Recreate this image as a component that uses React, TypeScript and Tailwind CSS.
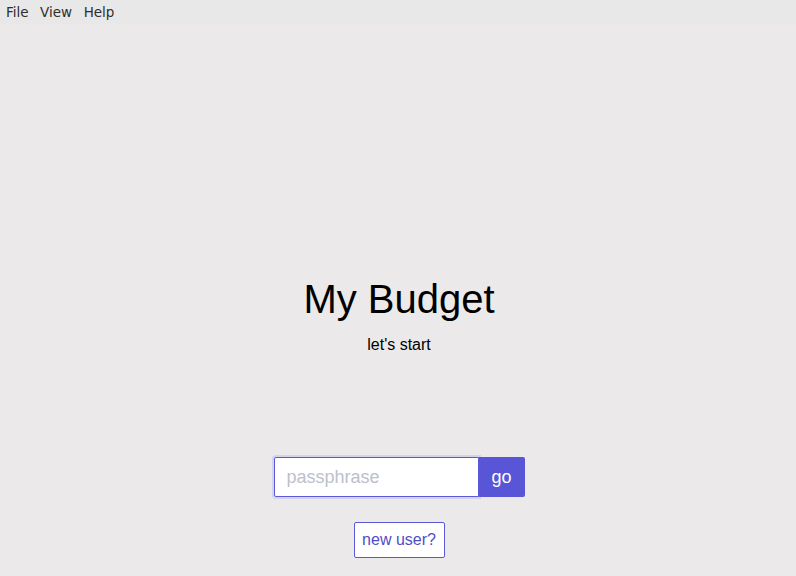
import React, { useState } from 'react';

export default function App() {
    const [pass, setPass] = useState('');

    return (
        <div className="w-[796px] h-[576px] flex flex-col bg-[#ebe9ea] overflow-hidden">
            <div className="h-[24px] flex items-center gap-[11.5px] px-[6px] pt-[1px] bg-[#e8e8e8] text-[13.5px] text-[#2e2e2e] font-['DejaVu_Sans',sans-serif]">
                <span>File</span>
                <span>View</span>
                <span>Help</span>
            </div>

            <div className="flex flex-col items-center pt-[252px] pl-[2px] font-['Liberation_Sans',Arial,sans-serif]">
                <h1 className="text-[40px] leading-[46px] text-black">My Budget</h1>
                <p className="mt-[14px] text-[16px] leading-[18px] text-black">let's start</p>

                <div className="mt-[103px] flex">
                    <input
                        value={pass}
                        onChange={(e) => setPass(e.target.value)}
                        placeholder="passphrase"
                        className="w-[205px] h-[40px] px-[12px] bg-white border border-[#5b59d8] rounded-l-[2px] outline-none shadow-[0_0_0_2px_#d4d2ec] text-[18px] text-black placeholder:text-[#bcbfcc]"
                    />
                    <button className="w-[46px] h-[40px] bg-[#5856d6] rounded-r-[2px] text-white text-[18px]">go</button>
                </div>

                <button className="mt-[25px] h-[36px] w-[91px] bg-white border border-[#5b59d8] rounded-[2px] text-[16px] text-[#4f4dc8]">
                    new user?
                </button>
            </div>
        </div>
    );
}
